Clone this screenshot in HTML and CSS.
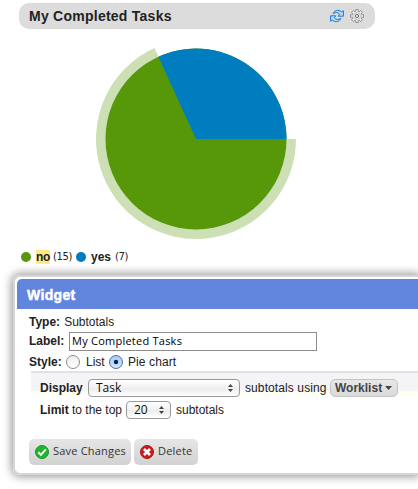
FILE: index.html
```html
<!DOCTYPE html>
<html lang="en">
<head>
<meta charset="utf-8">
<title>My Completed Tasks</title>
<link rel="stylesheet" href="styles.css">
</head>
<body>
<header class="titlebar">
  <h1>My Completed Tasks</h1>
  <svg class="icon" width="14" height="14" viewBox="0 0 14 14">
    <path d="M3.2 4.6C4.2 1.2 8.8 .2 11.2 2.8L13.4 1.8V7.2H8.2L9.6 5.2C8 3.2 5.6 3 3.2 4.6Z" fill="#a9ddff" stroke="#2376d2"/>
    <path d="M10.8 9.4C9.8 12.8 5.2 13.8 2.8 11.2L.6 12.2V6.8H5.8L4.4 8.8C6 10.8 8.4 11 10.8 9.4Z" fill="#a9ddff" stroke="#2376d2"/>
  </svg>
  <svg class="icon" width="14" height="14" viewBox="0 0 14 14">
    <g fill="#ececec" stroke="#808080" stroke-width=".8">
      <path d="M5.7 .5H8.3V13.5H5.7Z"/>
      <path d="M.5 5.7V8.3H13.5V5.7Z"/>
      <path d="M5.7 .5H8.3V13.5H5.7Z" transform="rotate(45 7 7)"/>
      <path d="M5.7 .5H8.3V13.5H5.7Z" transform="rotate(-45 7 7)"/>
    </g>
    <circle cx="7" cy="7" r="4.3" fill="#e8e8e8"/>
    <circle cx="7" cy="7" r="3.4" fill="none" stroke="#b4b4b4" stroke-width=".7"/>
    <circle cx="7" cy="7" r="1.6" fill="#dcdcdc" stroke="#777"/>
  </svg>
</header>
<svg class="pie" width="200" height="200" viewBox="-100 -100 200 200">
  <path d="M0 0H100A100 100 0 1 1-41.5-91Z" fill="#cde0b5"/>
  <circle r="90.5" fill="#57980a"/>
  <path d="M0 0H90.5A90.5 90.5 0 0 0-37.6-82.3Z" fill="#007dbe"/>
</svg>
<div class="legend">
  <i class="dot green"></i><b class="hit">no</b><small class="n15">(15)</small>
  <i class="dot blue"></i><b class="yes">yes</b><small>(7)</small>
</div>
<section class="panel">
  <h2>Widget</h2>
  <div class="form">
    <div class="row type"><b>Type:</b><span>Subtotals</span></div>
    <div class="row label"><b>Label:</b><input class="field" type="text" value="My Completed Tasks"></div>
    <div class="row style"><b>Style:</b><span class="radio"></span><span class="list">List</span><span class="radio on"></span><span class="piechart">Pie chart</span></div>
    <div class="options">
      <div class="row display"><b>Display</b>
        <span class="select wide"><span>Task</span><svg width="5" height="8" viewBox="0 0 5 8"><path d="M0 3L2.5 0L5 3ZM0 5H5L2.5 8Z" fill="#444"/></svg></span>
        <span class="using">subtotals using</span>
        <span class="worklist"><b>Worklist</b><svg width="7" height="4" viewBox="0 0 7 4"><path d="M0 0H7L3.5 4Z" fill="#444"/></svg></span>
      </div>
      <div class="row limit"><span class="top"><b>Limit</b> to the top</span>
        <span class="select narrow"><span>20</span><svg width="5" height="8" viewBox="0 0 5 8"><path d="M0 3L2.5 0L5 3ZM0 5H5L2.5 8Z" fill="#444"/></svg></span>
        <span>subtotals</span>
      </div>
    </div>
    <div class="buttons">
      <div class="button save"><svg width="14" height="14" viewBox="0 0 14 14"><circle cx="7" cy="7" r="6.5" fill="#20b52c" stroke="#17962a"/><path d="M3.3 7.3L5.9 9.9L10.8 4.4" fill="none" stroke="#fff" stroke-width="2"/></svg><span>Save Changes</span></div>
      <div class="button delete"><svg width="14" height="14" viewBox="0 0 14 14"><circle cx="7" cy="7" r="6.5" fill="#c81e1e" stroke="#a81717"/><path d="M4 4L10 10M10 4L4 10" stroke="#fff" stroke-width="2.7"/></svg><span>Delete</span></div>
    </div>
  </div>
</section>
</body>
</html>
```
FILE: styles.css
```css
* { box-sizing: border-box; }
body {
  margin: 0;
  height: 489px;
  overflow: hidden;
  background: #fff;
  color: #222;
  font: 12px/14px "Liberation Sans", Arial, sans-serif;
  white-space: nowrap;
}
svg { display: block; flex: none; }
.titlebar {
  display: flex;
  align-items: center;
  width: 356px;
  height: 26px;
  margin: 3px 0 0 19px;
  padding: 0 11px 0 10px;
  border-radius: 10px;
  background: #dcdcdc;
}
h1 { flex: 1; margin: 0; font-size: 14px; line-height: 16px; letter-spacing: .25px; }
.icon + .icon { margin-left: 6px; }
.pie { margin: 10px 0 0 96px; }
.legend { display: flex; align-items: center; height: 14px; margin: 11px 0 0 21px; }
.dot { width: 10px; height: 10px; border-radius: 50%; }
.green { background: #57980a; }
.blue { background: #007dbe; }
.hit { width: 14px; margin-left: 5px; background: #ffe982; letter-spacing: -.3px; }
.legend small { margin-left: 3px; font: 10px/14px "DejaVu Sans", sans-serif; letter-spacing: -.4px; }
.legend .n15 { width: 23px; }
.yes { width: 21px; margin-left: 5px; }
.panel {
  height: 200px;
  margin: 11px 0 0 13px;
  padding: 2px 0 2px 2px;
  border: 2px solid #d6d6d6;
  border-right: 0;
  border-radius: 7px 0 0 7px;
  box-shadow: 0 0 8px 2px rgba(0, 0, 0, .38);
}
h2 {
  height: 30px;
  margin: 0;
  padding-left: 10px;
  border-radius: 5px 0 0 0;
  background: #6184dc;
  color: #fff;
  font-size: 14px;
  line-height: 32px;
  letter-spacing: .35px;
  -webkit-text-stroke: .5px #fff;
}
.form { padding: 6px 0 0 12px; }
.row { display: flex; align-items: center; }
.type { height: 14px; gap: 4px; }
.label { height: 22px; padding-top: 2px; }
.label b { width: 40px; }
.field {
  width: 248px;
  height: 19px;
  padding: 0 2px 1px;
  border: 1px solid #8d8d8d;
  background: #fff;
  color: #000;
  font: 11px "Open Sans", sans-serif;
  letter-spacing: .24px;
}
.style { height: 20px; padding-top: 1px; }
.style b { width: 37px; }
.radio {
  width: 14px;
  height: 14px;
  border: 1px solid #8c8c8c;
  border-radius: 50%;
  background: linear-gradient(#eee, #fff);
}
.radio.on {
  border-color: #4c6f9e;
  background: radial-gradient(circle, #102240 0 1.8px, transparent 2.6px), linear-gradient(#a3cbf3, #cdeaff);
}
.list { width: 23px; margin-left: 6px; }
.piechart { margin-left: 5px; letter-spacing: .1px; }
.options {
  height: 68px;
  margin-left: 2px;
  padding: 6px 0 0 9px;
  border-top: 2px solid #e2e2e4;
  background: linear-gradient(#f4f4f6 0 18px, #fdfdf2 18px 22px, #fff 22px);
}
.display { height: 18px; }
.display > b { width: 48px; }
.select {
  display: flex;
  align-items: center;
  justify-content: space-between;
  height: 18px;
  padding: 0 6px 0 7px;
  border: 1px solid #999;
  border-radius: 4px;
  background: linear-gradient(#fff, #f0f0f0 50%, #ececec 51%, #fff);
  color: #111;
  font: 12px/16px "Open Sans", sans-serif;
}
.wide { width: 152px; }
.narrow { width: 45px; margin-right: 5px; }
.using { width: 85px; margin-left: 5px; letter-spacing: .1px; }
.worklist {
  display: flex;
  align-items: center;
  gap: 3px;
  width: 68px;
  height: 18px;
  padding-left: 4px;
  border: 1px solid #c4c4c4;
  border-radius: 5px;
  background: linear-gradient(#e8e8e8, #dadada);
  color: #444;
}
.limit { height: 18px; margin-top: 4px; }
.top { width: 86px; }
.buttons { display: flex; gap: 3px; }
.button {
  display: flex;
  align-items: center;
  gap: 4px;
  height: 26px;
  padding-left: 6px;
  border-radius: 5px;
  background: linear-gradient(#e6e6e6, #d2d2d2);
  color: #333;
  font: 11px/14px "Open Sans", sans-serif;
  letter-spacing: .2px;
}
.button span { margin-top: -2px; }
.save { width: 102px; }
.delete { width: 64px; }
```
